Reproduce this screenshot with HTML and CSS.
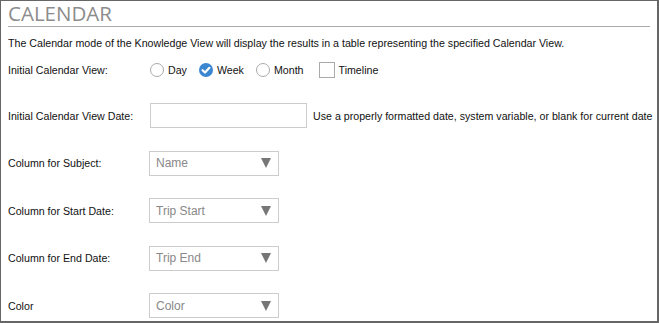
FILE: index.html
```html
<!DOCTYPE html>
<html lang="en">
<head>
    <meta charset="UTF-8">
    <title>Calendar</title>
    <link rel="stylesheet" href="styles.css">
</head>
<body>
    <div class="panel">
        <h1 class="title">CALENDAR</h1>
        <p class="intro">The Calendar mode of the Knowledge View will display the results in a table representing the specified Calendar View.</p>

        <div class="row row-view">
            <label class="label">Initial Calendar View:</label>
            <div class="options">
                <span class="option"><span class="radio"></span>Day</span>
                <span class="option"><span class="radio checked">
                    <svg width="14" height="14" viewBox="0 0 14 14"><path d="M3.6 7.2 L6 9.5 L10.4 4.8" fill="none" stroke="#fff" stroke-width="2.2" stroke-linecap="round" stroke-linejoin="round"/></svg>
                </span>Week</span>
                <span class="option"><span class="radio"></span>Month</span>
                <span class="option option-check"><span class="checkbox"></span>Timeline</span>
            </div>
        </div>

        <div class="row row-date">
            <label class="label">Initial Calendar View Date:</label>
            <input class="text-input" type="text">
            <span class="help">Use a properly formatted date, system variable, or blank for current date</span>
        </div>

        <div class="row row-select">
            <label class="label">Column for Subject:</label>
            <div class="select"><span>Name</span><span class="arrow"></span></div>
        </div>

        <div class="row row-select">
            <label class="label">Column for Start Date:</label>
            <div class="select"><span>Trip Start</span><span class="arrow"></span></div>
        </div>

        <div class="row row-select">
            <label class="label">Column for End Date:</label>
            <div class="select"><span>Trip End</span><span class="arrow"></span></div>
        </div>

        <div class="row row-select">
            <label class="label">Color</label>
            <div class="select"><span>Color</span><span class="arrow"></span></div>
        </div>
    </div>
</body>
</html>
```
FILE: styles.css
```css
* {
    box-sizing: border-box;
}

body {
    margin: 0;
    font-family: "Liberation Sans", Arial, sans-serif;
    font-size: 10.65px;
    color: #111;
    background-color: white;
}

.panel {
    width: 659px;
    height: 323px;
    border: 1px solid #666;
    border-right-width: 2px;
    border-bottom-width: 2px;
    overflow: hidden;
}

.title {
    margin: 0 7px 0 7px;
    padding: 0 0 1px 0;
    font-family: "Open Sans", sans-serif;
    font-weight: normal;
    font-size: 20.5px;
    line-height: 24px;
    color: #8c8c8c;
    border-bottom: 1px solid #aaa;
}

.intro {
    margin: 9px 0 0 7px;
    line-height: 14px;
}

.row {
    display: flex;
    align-items: center;
    padding-left: 7px;
    white-space: nowrap;
}

.label {
    width: 142px;
    flex-shrink: 0;
}

.row-view {
    margin-top: 9px;
    height: 22px;
}

.row-date {
    margin-top: 22px;
}

.row-select {
    margin-top: 22.6px;
}

.options {
    display: flex;
    align-items: center;
}

.option {
    display: flex;
    align-items: center;
    margin-right: 12px;
}

.option-check {
    margin-left: 3px;
}

.radio {
    width: 14px;
    height: 14px;
    border: 1px solid #aaa;
    border-radius: 50%;
    margin-right: 4px;
    display: flex;
}

.radio.checked {
    border: none;
    background-color: #3b86d1;
}

.checkbox {
    width: 16px;
    height: 16px;
    border: 1px solid #aaa;
    margin-right: 4px;
}

.text-input {
    width: 157px;
    height: 25px;
    margin: 0;
    border: 1px solid #ccc;
    font: inherit;
}

.help {
    margin-left: 6px;
}

.select {
    width: 130px;
    height: 25px;
    margin-left: -1px;
    border: 1px solid #ccc;
    display: flex;
    align-items: center;
    justify-content: space-between;
    padding: 0 7px 0 6px;
    font-size: 12px;
    color: #888;
}

.arrow {
    width: 0;
    height: 0;
    border-left: 5.5px solid transparent;
    border-right: 5.5px solid transparent;
    border-top: 10px solid #777;
}
```
